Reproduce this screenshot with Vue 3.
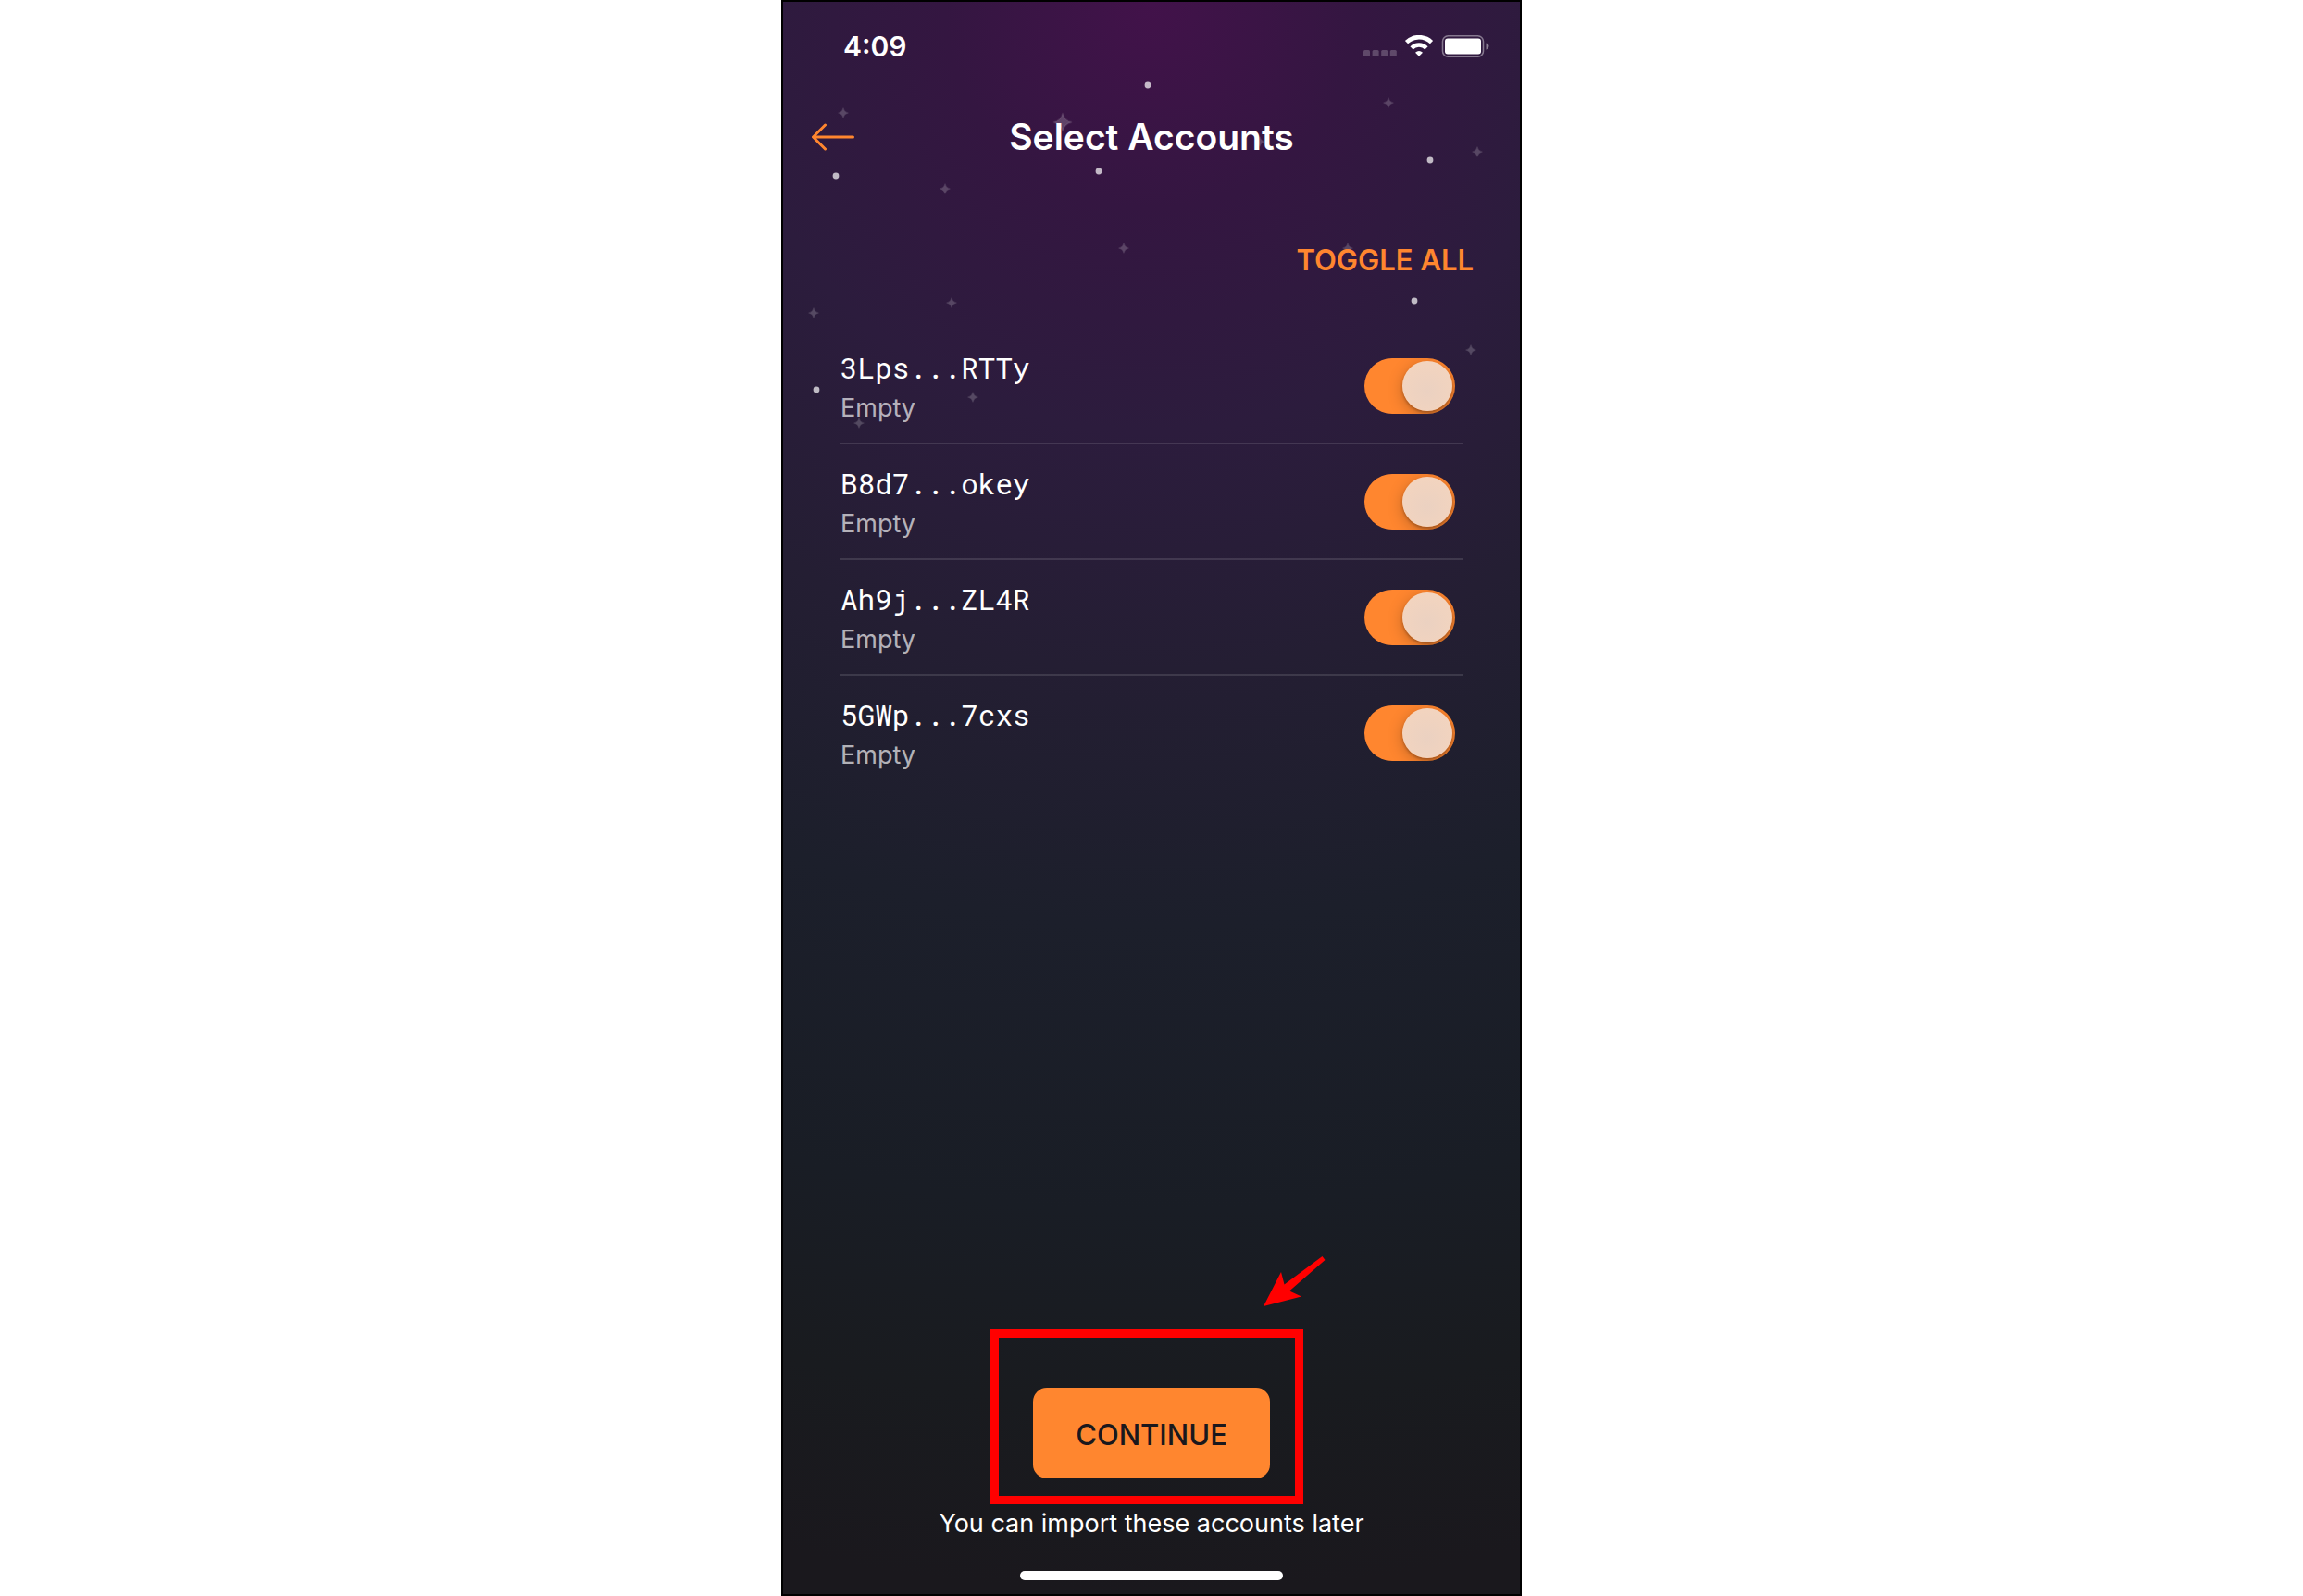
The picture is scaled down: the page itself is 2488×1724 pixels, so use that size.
<template>
  <main class="screen">
    <svg class="stars" viewBox="0 0 796 480" preserveAspectRatio="xMidYMin slice" aria-hidden="true">
      <circle v-for="(d, i) in dots" :key="'d' + i" :cx="d[0]" :cy="d[1]" r="3.4" fill="#fff" fill-opacity="0.7" />
      <path
        v-for="(s, i) in sparkles"
        :key="'s' + i"
        d="M0-5.6Q.9-.9 5.6 0Q.9.9 0 5.6Q-.9.9-5.6 0Q-.9-.9 0-5.6Z"
        fill="#fff"
        fill-opacity="0.2"
        stroke="#fff"
        stroke-opacity="0.06"
        :transform="`translate(${s[0]} ${s[1]}) scale(${s[2] || 1})`"
      />
    </svg>

    <div class="status">
      <time>4:09</time>
      <svg width="136" height="24" viewBox="0 0 136 24" role="img" aria-label="Wi-Fi on, battery full">
        <g fill="#fff" fill-opacity="0.22">
          <rect x="0" y="16" width="7" height="7" rx="1.500" />
          <rect x="9.6" y="16" width="7" height="7" rx="1.500" />
          <rect x="19.2" y="16" width="7" height="7" rx="1.500" />
          <rect x="28.8" y="16" width="7" height="7" rx="1.500" />
        </g>
        <g fill="none" stroke="#fff" stroke-width="4.600">
          <path d="M46.500 7.600A19.500 19.500 0 0 1 73.500 7.600" />
          <path d="M52 13.800A11.500 11.500 0 0 1 68 13.800" />
        </g>
        <path d="M60 22.800L56 18.800Q60 15.200 64 18.800Z" fill="#fff" />
        <rect x="85.500" y="0.800" width="44" height="22.400" rx="6" fill="none" stroke="#fff" stroke-opacity="0.42" stroke-width="1.500" />
        <rect x="88" y="3.500" width="39" height="17" rx="3" fill="#fff" />
        <path d="M132.500 8.500Q135.500 9.500 135.500 12T132.500 15.700Z" fill="#fff" fill-opacity="0.45" />
      </svg>
    </div>

    <header class="header">
      <button class="back" type="button" aria-label="Back">
        <svg width="46" height="30" viewBox="0 0 46 30">
          <path d="M44.500 15H2M14.500 2L1.500 15L14.500 28" fill="none" stroke="#ff862f" stroke-width="3" stroke-linecap="round" stroke-linejoin="round" />
        </svg>
      </button>
      <h1>Select Accounts</h1>
    </header>

    <button class="toggle-all" type="button" @click="toggleAll">TOGGLE ALL</button>

    <ul class="accounts">
      <li v-for="account in accounts" :key="account.address">
        <label :for="account.address">
          <span class="address">{{ account.address }}</span>
          <span class="balance">{{ account.balance }}</span>
        </label>
        <input :id="account.address" v-model="account.selected" class="switch" type="checkbox" />
      </li>
    </ul>

    <footer class="footer">
      <div class="action">
        <button class="continue" type="button">CONTINUE</button>
        <div class="highlight"></div>
        <svg class="pointer" width="68" height="56" viewBox="0 0 68 56" aria-hidden="true">
          <path d="M0 54L19 17L22.500 30.500L63.500 0L66.500 4L28 37.500L41 43.500Z" fill="#f00" />
        </svg>
      </div>
      <p>You can import these accounts later</p>
      <div class="home-bar"></div>
    </footer>
  </main>
</template>

<script setup>
import { ref } from 'vue'

const accounts = ref([
  { address: '3Lps...RTTy', balance: 'Empty', selected: true },
  { address: 'B8d7...okey', balance: 'Empty', selected: true },
  { address: 'Ah9j...ZL4R', balance: 'Empty', selected: true },
  { address: '5GWp...7cxs', balance: 'Empty', selected: true }
])

function toggleAll() {
  const next = !accounts.value.every(a => a.selected)
  accounts.value.forEach(a => { a.selected = next })
}

const dots = [[57, 188], [341, 183], [394, 90], [699, 171], [682, 323], [36, 419]]

// x, y, optional scale
const sparkles = [
  [302, 130, 1.8], [65, 120], [175, 202], [654, 109], [750, 162], [515, 151],
  [368, 266], [610, 266], [182, 325], [33, 336], [205, 427], [82, 455], [743, 376]
]
</script>

<style>
body { margin: 0; background: #fff; }
</style>

<style scoped>
.screen {
  position: relative;
  box-sizing: border-box;
  display: flex;
  flex-direction: column;
  width: 100%;
  max-width: 800px;
  min-height: 100vh;
  margin: 0 auto;
  border: 2px solid #000;
  background: radial-gradient(circle farthest-side at 50% 0, #42124a 0%, #341641 13%, #2c1c3d 27%, #241e33 42%, #1c1f2b 58%, #191d25 76%, #191b1f 88%, #1a181d 100%);
  color: #fff;
  font-family: Inter, Roboto, sans-serif;
}
.stars {
  position: absolute;
  top: 0;
  left: 0;
  width: 100%;
  height: 480px;
}
.status, .header, .toggle-all, .accounts, .footer { position: relative; }
button {
  padding: 0;
  border: none;
  background: none;
  font-family: inherit;
  cursor: pointer;
}
.status {
  display: flex;
  align-items: center;
  justify-content: space-between;
  height: 96px;
  padding: 0 33px 0 65px;
}
.status time { font-size: 30px; font-weight: 600; }
.header {
  display: grid;
  grid-template-columns: 46px 1fr 46px;
  align-items: center;
  height: 100px;
  padding: 0 31px;
}
.back { display: flex; }
h1 {
  margin: 0;
  text-align: center;
  font-size: 39px;
  font-weight: 600;
  line-height: 46px;
}
.toggle-all {
  align-self: flex-end;
  height: 60px;
  margin: 52px 50px 45px 0;
  color: #ff862f;
  font-size: 31px;
  font-weight: 600;
}
.accounts {
  margin: 0 62px;
  padding: 0;
  list-style: none;
}
li {
  box-sizing: border-box;
  display: flex;
  align-items: center;
  justify-content: space-between;
  height: 125px;
  padding-right: 8px;
  border-bottom: 2px solid rgba(255, 255, 255, 0.12);
}
li:last-child { border-color: transparent; }
label {
  display: flex;
  flex-direction: column;
  padding-top: 4px;
}
.address {
  font-family: "Roboto Mono", "DejaVu Sans Mono", monospace;
  font-size: 31px;
  line-height: 44px;
}
.balance {
  color: rgba(255, 255, 255, 0.68);
  font-size: 27px;
  line-height: 44px;
}
.switch {
  appearance: none;
  flex: none;
  width: 98px;
  height: 60px;
  margin: 0;
  padding: 3px;
  box-sizing: border-box;
  overflow: hidden;
  border-radius: 30px;
  background: #4a4553;
  cursor: pointer;
}
.switch::before {
  content: "";
  display: block;
  width: 54px;
  height: 54px;
  border-radius: 50%;
  background: radial-gradient(circle at 50% 60%, #ebd1c1, #f5d5be);
  box-shadow: 0 4px 16px rgba(0, 0, 0, 0.25), 0 2px 3px rgba(0, 0, 0, 0.25);
}
.switch:checked { background: #ff862f; }
.switch:checked::before { margin-left: auto; }
.footer {
  display: flex;
  flex-direction: column;
  align-items: center;
  margin-top: auto;
  padding-bottom: 15px;
}
.action { position: relative; }
.continue {
  display: block;
  width: 256px;
  height: 98px;
  padding-top: 2px;
  border-radius: 15px;
  background: #ff862f;
  color: #1a181d;
  font-size: 31px;
  font-weight: 500;
}
/* callout drawn around and above the button */
.highlight {
  position: absolute;
  inset: -63px -36px -28px -46px;
  border: 9px solid #f00;
  pointer-events: none;
}
.pointer {
  position: absolute;
  top: -142px;
  left: 249px;
}
.footer p {
  margin: 33px 0 35px;
  font-size: 27px;
  line-height: 32px;
}
.home-bar {
  width: 284px;
  height: 10px;
  border-radius: 5px;
  background: #fff;
}
</style>
